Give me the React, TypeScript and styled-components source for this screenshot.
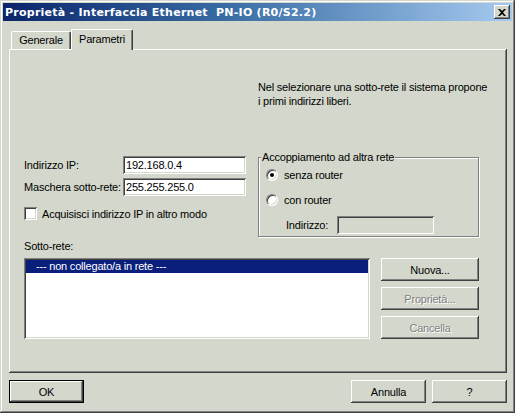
import React from 'react';
import styled, { createGlobalStyle, css } from 'styled-components';

const FACE = '#d4d8cc';
const SHADOW = '#808080';
const DARK = '#404040';

const GlobalStyle = createGlobalStyle`
  html, body {
    margin: 0;
    padding: 0;
    background: ${FACE};
  }
  * {
    box-sizing: border-box;
  }
`;

const raised = css`
  box-shadow: inset -1px -1px ${DARK}, inset 1px 1px #fff, inset -2px -2px ${SHADOW}, inset 2px 2px ${FACE};
`;

const sunken = css`
  box-shadow: inset 1px 1px ${SHADOW}, inset -1px -1px #fff, inset 2px 2px ${DARK}, inset -2px -2px ${FACE};
`;

const Window = styled.div`
  width: 515px;
  height: 413px;
  padding: 3px;
  display: flex;
  flex-direction: column;
  background: ${FACE};
  font-family: 'Liberation Sans', Arial, sans-serif;
  font-size: 11px;
  letter-spacing: -0.2px;
  color: #000;
  box-shadow: inset -1px -1px ${DARK}, inset 1px 1px ${FACE}, inset -2px -2px ${SHADOW}, inset 2px 2px #fff;
`;

const TitleBar = styled.div`
  height: 18px;
  display: flex;
  align-items: center;
  justify-content: space-between;
  padding: 0 2px 0 2px;
  background: linear-gradient(90deg, #0a246a 0%, #3a6ea5 45%, #a6caf0 100%);
  color: #fff;
  font-family: 'DejaVu Sans', Verdana, sans-serif;
  font-weight: bold;
  letter-spacing: 0.25px;
  white-space: nowrap;
`;

const CloseButton = styled.div`
  width: 16px;
  height: 14px;
  display: flex;
  align-items: center;
  justify-content: center;
  background: ${FACE};
  ${raised};
`;

const Body = styled.div`
  flex: 1;
  display: flex;
  flex-direction: column;
  padding: 8px 5px 0 6px;
`;

const TabRow = styled.div`
  display: flex;
  align-items: flex-end;
  height: 20px;
  padding-left: 2px;
  position: relative;
  z-index: 1;
`;

const Tab = styled.div<{ $active?: boolean }>`
  height: ${(p) => (p.$active ? '21px' : '18px')};
  width: ${(p) => (p.$active ? '62px' : '60px')};
  margin-bottom: ${(p) => (p.$active ? '-1px' : '0')};
  padding-top: ${(p) => (p.$active ? '3px' : '2px')};
  text-align: center;
  background: ${FACE};
  border-top: 1px solid #fff;
  border-left: 1px solid #fff;
  border-right: 1px solid ${DARK};
  border-radius: 2px 2px 0 0;
  box-shadow: inset -1px 0 ${SHADOW};
`;

const Panel = styled.div`
  width: 498px;
  height: 324px;
  display: flex;
  flex-direction: column;
  padding: 0 28px 0 15px;
  box-shadow: inset -1px -1px ${DARK}, inset 1px 1px #fff, inset -2px -2px ${SHADOW};
`;

const InfoText = styled.div`
  margin: 31px 0 0 234px;
  line-height: 14px;
  white-space: nowrap;
`;

const MiddleRow = styled.div`
  display: flex;
  justify-content: space-between;
  margin-top: 42px;
`;

const LeftColumn = styled.div`
  display: flex;
  flex-direction: column;
  padding-top: 6px;
`;

const FieldRow = styled.div`
  display: flex;
  align-items: center;
  height: 18px;
  & + & {
    margin-top: 4px;
  }
`;

const FieldLabel = styled.span<{ $width: number }>`
  width: ${(p) => p.$width}px;
  flex-shrink: 0;
`;

const TextBox = styled.div<{ $width: number; $disabled?: boolean }>`
  width: ${(p) => p.$width}px;
  height: 18px;
  padding: 2px 3px;
  line-height: 14px;
  background: ${(p) => (p.$disabled ? FACE : '#fff')};
  ${sunken};
`;

const CheckRow = styled.label`
  display: flex;
  align-items: center;
  gap: 5px;
  margin-top: 11px;
`;

const CheckBox = styled.span`
  width: 13px;
  height: 13px;
  background: #fff;
  ${sunken};
`;

const GroupBox = styled.fieldset`
  width: 221px;
  height: 87px;
  margin: 0;
  padding: 0 0 0 7px;
  border: 1px solid ${SHADOW};
  box-shadow: inset 1px 1px #fff, 1px 1px #fff;
  display: flex;
  flex-direction: column;
`;

const Legend = styled.legend`
  padding: 0 1px;
  margin-left: -5px;
  line-height: 14px;
  background: ${FACE};
`;

const RadioRow = styled.label<{ $mt?: number }>`
  display: flex;
  align-items: center;
  gap: 6px;
  height: 14px;
  margin-top: ${(p) => p.$mt ?? 0}px;
`;

const RadioCircle = styled.span<{ $checked?: boolean }>`
  width: 12px;
  height: 12px;
  border-radius: 50%;
  background: #fff;
  border-top: 1px solid ${SHADOW};
  border-left: 1px solid ${SHADOW};
  border-right: 1px solid #fff;
  border-bottom: 1px solid #fff;
  box-shadow: inset 1px 1px ${DARK}, inset -1px -1px ${FACE};
  display: flex;
  align-items: center;
  justify-content: center;
  &::after {
    content: '';
    width: 4px;
    height: 4px;
    border-radius: 50%;
    background: ${(p) => (p.$checked ? '#000' : 'transparent')};
  }
`;

const AddressRow = styled.div`
  display: flex;
  align-items: center;
  margin: 9px 0 0 20px;
`;

const SubnetLabel = styled.div`
  margin-top: 2px;
  line-height: 14px;
`;

const ListRow = styled.div`
  display: flex;
  margin-top: 5px;
`;

const ListBox = styled.div`
  width: 346px;
  height: 81px;
  padding: 2px;
  background: #fff;
  ${sunken};
`;

const ListItem = styled.div<{ $selected?: boolean }>`
  height: 13px;
  line-height: 13px;
  padding-left: 10px;
  background: ${(p) => (p.$selected ? '#0a1f7c' : 'transparent')};
  color: ${(p) => (p.$selected ? '#fff' : '#000')};
`;

const SideButtons = styled.div`
  display: flex;
  flex-direction: column;
  margin-left: 11px;
  gap: 6px;
`;

const Button = styled.div<{ $width: number; $disabled?: boolean; $default?: boolean }>`
  width: ${(p) => p.$width}px;
  height: 23px;
  display: flex;
  align-items: center;
  justify-content: center;
  background: ${FACE};
  color: ${(p) => (p.$disabled ? SHADOW : '#000')};
  text-shadow: ${(p) => (p.$disabled ? '1px 1px #fff' : 'none')};
  ${(p) =>
    p.$default
      ? css`
          border: 1px solid #000;
          box-shadow: inset -1px -1px ${DARK}, inset 1px 1px #fff, inset -2px -2px ${SHADOW};
        `
      : raised};
`;

const Footer = styled.div`
  display: flex;
  gap: 6px;
  margin-top: 7px;
  & > :first-child {
    margin-right: auto;
  }
`;

const CloseIcon = () => (
  <svg width="8" height="7" viewBox="0 0 8 7">
    <path d="M0 0h2l2 2 2-2h2L5 3.5 8 7H6L4 5 2 7H0l3-3.5z" fill="#000" />
  </svg>
);

const App = () => {
  return (
    <>
      <GlobalStyle />
      <Window>
        <TitleBar>
          <span>Proprietà - Interfaccia Ethernet&nbsp; PN-IO (R0/S2.2)</span>
          <CloseButton>
            <CloseIcon />
          </CloseButton>
        </TitleBar>
        <Body>
          <TabRow>
            <Tab>Generale</Tab>
            <Tab $active>Parametri</Tab>
          </TabRow>
          <Panel>
            <InfoText>
              Nel selezionare una sotto-rete il sistema propone
              <br />i primi indirizzi liberi.
            </InfoText>
            <MiddleRow>
              <LeftColumn>
                <FieldRow>
                  <FieldLabel $width={99}>Indirizzo IP:</FieldLabel>
                  <TextBox $width={123}>192.168.0.4</TextBox>
                </FieldRow>
                <FieldRow>
                  <FieldLabel $width={99}>Maschera sotto-rete:</FieldLabel>
                  <TextBox $width={123}>255.255.255.0</TextBox>
                </FieldRow>
                <CheckRow>
                  <CheckBox />
                  Acquisisci indirizzo IP in altro modo
                </CheckRow>
              </LeftColumn>
              <GroupBox>
                <Legend>Accoppiamento ad altra rete</Legend>
                <RadioRow $mt={4}>
                  <RadioCircle $checked />
                  senza router
                </RadioRow>
                <RadioRow $mt={11}>
                  <RadioCircle />
                  con router
                </RadioRow>
                <AddressRow>
                  <FieldLabel $width={51}>Indirizzo:</FieldLabel>
                  <TextBox $width={97} $disabled />
                </AddressRow>
              </GroupBox>
            </MiddleRow>
            <SubnetLabel>Sotto-rete:</SubnetLabel>
            <ListRow>
              <ListBox>
                <ListItem $selected>--- non collegato/a in rete ---</ListItem>
              </ListBox>
              <SideButtons>
                <Button $width={98}>Nuova...</Button>
                <Button $width={98} $disabled>
                  Proprietà...
                </Button>
                <Button $width={98} $disabled>
                  Cancella
                </Button>
              </SideButtons>
            </ListRow>
          </Panel>
          <Footer>
            <Button $width={75} $default>
              OK
            </Button>
            <Button $width={75}>Annulla</Button>
            <Button $width={75}>?</Button>
          </Footer>
        </Body>
      </Window>
    </>
  );
};

export default App;
